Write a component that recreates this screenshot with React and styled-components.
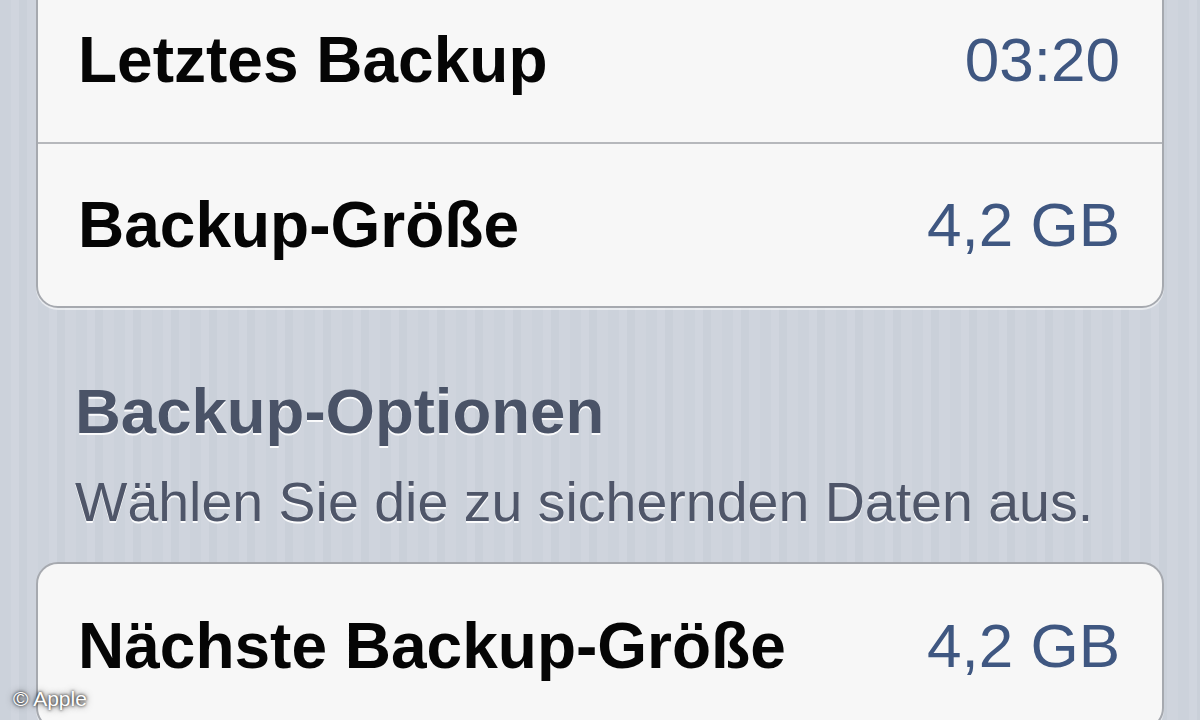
import React from 'react';
import styled, { createGlobalStyle } from 'styled-components';

const GlobalStyle = createGlobalStyle`
  html, body {
    margin: 0;
    padding: 0;
  }
  body {
    font-family: "Liberation Sans", Arial, Helvetica, sans-serif;
    -webkit-font-smoothing: antialiased;
  }
`;

const Page = styled.div`
  position: relative;
  width: 1200px;
  height: 720px;
  overflow: hidden;
  box-sizing: border-box;
  padding: 0 36px;
  background-color: #cdd3dc;
  background-image: repeating-linear-gradient(
    90deg,
    #ccd2db 0px,
    #ccd2db 11px,
    #d0d5de 11px,
    #d0d5de 19px,
    #cad0d9 19px,
    #cad0d9 27px,
    #cfd4dd 27px,
    #cfd4dd 38px
  );
`;

const Card = styled.div`
  margin-top: ${(p) => p.$offset || 0}px;
  background: #f7f7f7;
  border: 2px solid #a6a9af;
  border-radius: 22px;
  box-shadow: 0 2px 0 rgba(255, 255, 255, 0.55);
  overflow: hidden;
`;

const Row = styled.div`
  display: flex;
  align-items: center;
  justify-content: space-between;
  height: 164px;
  padding: 0 42px 0 40px;
  box-sizing: border-box;

  & + & {
    border-top: 2px solid #b6b8bc;
  }
`;

const Label = styled.div`
  font-size: 64px;
  line-height: 1;
  font-weight: 700;
  color: #050505;
`;

const Value = styled.div`
  font-size: 62px;
  line-height: 1;
  font-weight: 400;
  color: #3f5781;
`;

const Section = styled.div`
  padding: 72px 0 0 39px;
`;

const SectionTitle = styled.div`
  font-size: 63.5px;
  line-height: 1;
  font-weight: 700;
  color: #4a5367;
  text-shadow: 0 2px 0 rgba(255, 255, 255, 0.9);
`;

const SectionHint = styled.div`
  margin-top: 31px;
  font-size: 55.5px;
  line-height: 1;
  font-weight: 400;
  color: #4f5669;
  text-shadow: 0 2px 0 rgba(255, 255, 255, 0.9);
`;

const Watermark = styled.div`
  position: absolute;
  left: 13px;
  bottom: 11px;
  font-size: 21px;
  line-height: 1;
  color: #ffffff;
  text-shadow: 0 0 3px rgba(0, 0, 0, 0.95), 0 0 7px rgba(0, 0, 0, 0.7);
`;

const lastBackup = [
  { label: 'Letztes Backup', value: '03:20' },
  { label: 'Backup-Größe', value: '4,2 GB' },
];

const nextBackup = [{ label: 'Nächste Backup-Größe', value: '4,2 GB' }];

const SettingsGroup = ({ rows, offset }) => (
  <Card $offset={offset}>
    {rows.map((row) => (
      <Row key={row.label}>
        <Label>{row.label}</Label>
        <Value>{row.value}</Value>
      </Row>
    ))}
  </Card>
);

const App = () => (
  <>
    <GlobalStyle />
    <Page>
      <SettingsGroup rows={lastBackup} offset={-24} />

      <Section>
        <SectionTitle>Backup-Optionen</SectionTitle>
        <SectionHint>Wählen Sie die zu sichernden Daten aus.</SectionHint>
      </Section>

      <SettingsGroup rows={nextBackup} offset={32} />

      <Watermark>© Apple</Watermark>
    </Page>
  </>
);

export default App;
